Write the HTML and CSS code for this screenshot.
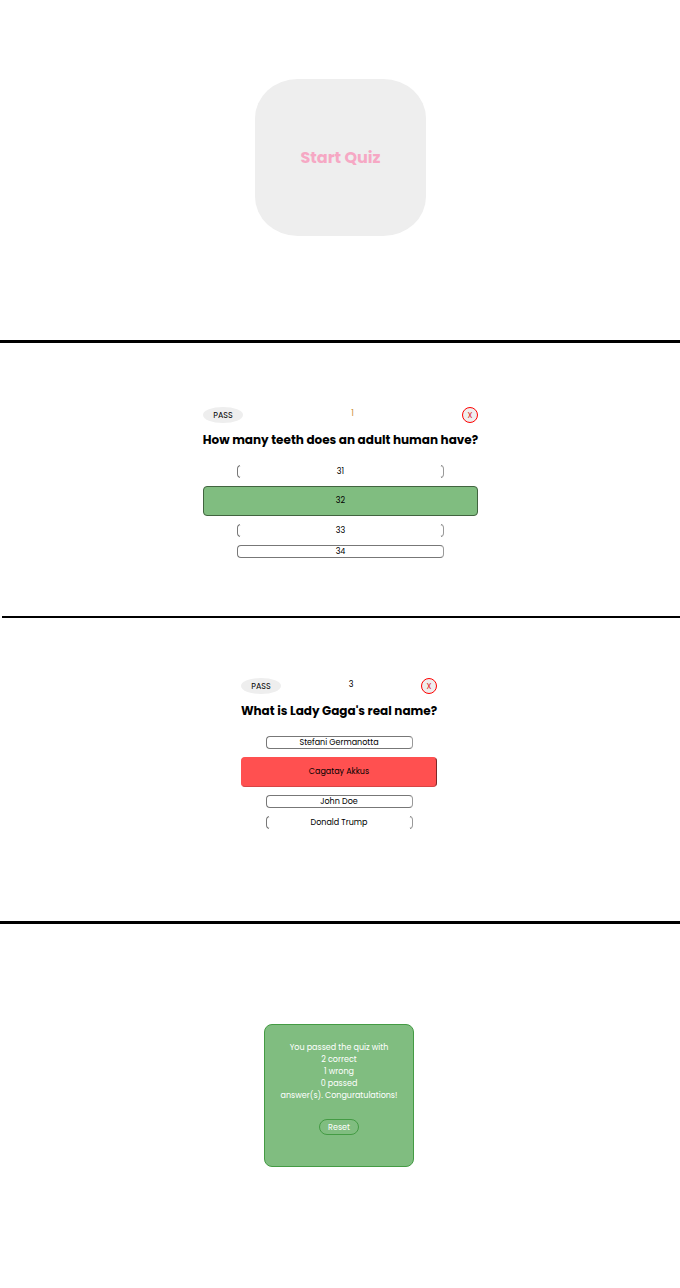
FILE: index.html
```html
<!DOCTYPE html>
<html lang="en">
<head>
<meta charset="utf-8">
<meta name="viewport" content="width=device-width, initial-scale=1">
<title>Quiz</title>
<link rel="stylesheet" href="styles.css">
</head>
<body>
<main>
  <section class="screen screen-start">
    <button class="start" type="button">Start Quiz</button>
  </section>
  <hr class="divider">
  <section class="screen screen-question">
    <div class="quiz">
      <div class="quiz-bar">
        <button class="pass" type="button">PASS</button>
        <span class="number number-amber">1</span>
        <button class="close" type="button">X</button>
      </div>
      <h2 class="question">How many teeth does an adult human have?</h2>
      <div class="options">
        <button class="option option-open" type="button">31</button>
        <button class="option option-correct" type="button">32</button>
        <button class="option option-open" type="button">33</button>
        <button class="option" type="button">34</button>
      </div>
    </div>
  </section>
  <hr class="divider divider-thin">
  <section class="screen screen-question screen-tall">
    <div class="quiz quiz-narrow">
      <div class="quiz-bar">
        <button class="pass" type="button">PASS</button>
        <span class="number">3</span>
        <button class="close" type="button">X</button>
      </div>
      <h2 class="question">What is Lady Gaga's real name?</h2>
      <div class="options">
        <button class="option" type="button">Stefani Germanotta</button>
        <button class="option option-wrong" type="button">Cagatay Akkus</button>
        <button class="option" type="button">John Doe</button>
        <button class="option option-open" type="button">Donald Trump</button>
      </div>
    </div>
  </section>
  <hr class="divider">
  <section class="screen screen-result">
    <div class="result">
      <p class="summary">You passed the quiz with<br>2 correct<br>1 wrong<br>0 passed<br>answer(s). Conguratulations!</p>
      <button class="reset" type="button">Reset</button>
    </div>
  </section>
</main>
</body>
</html>
```
FILE: styles.css
```css
* {
  box-sizing: border-box;
}

body {
  margin: 0;
  background: #fff;
  color: #000;
  font-family: Poppins, Inter, "Open Sans", sans-serif;
  font-size: 8px;
  line-height: 12px;
}

button {
  margin: 0;
  padding: 0;
  font: inherit;
  color: inherit;
  cursor: pointer;
}

.screen {
  display: flex;
  justify-content: center;
  align-items: flex-start;
}

.screen-start {
  padding: 79px 0 104px 1px;
}

.screen-question {
  padding: 64px 0 58px 1px;
}

.screen-tall {
  padding: 60px 2px 92px 0;
}

.screen-result {
  padding: 100px 2px 121px 0;
}

.divider {
  height: 3px;
  margin: 0;
  border: 0;
  background: #000;
}

.divider-thin {
  height: 2px;
  margin-left: 2px;
}

.start {
  width: 171px;
  height: 157px;
  border: 0;
  border-radius: 25%;
  background: #eee;
  color: #f6a8c4;
  font-size: 16px;
  font-weight: 700;
}

.quiz {
  width: 275px;
}

.quiz-narrow {
  width: 196px;
}

.quiz-bar {
  display: flex;
  justify-content: space-between;
  align-items: flex-start;
}

.number {
  line-height: 14px;
}

.number-amber {
  color: #c98a30;
}

.pass,
.close {
  height: 16px;
  padding-top: 2px;
  border-radius: 50%;
  background: #eee;
}

.pass {
  width: 40px;
  border: 0;
}

.close {
  width: 16px;
  border: 1px solid #f00;
  color: #d22;
}

.question {
  display: flex;
  justify-content: center;
  margin: 8px 0 16px;
  font-size: 12px;
  line-height: 18px;
  font-weight: 700;
  white-space: nowrap;
}

.options {
  display: flex;
  flex-direction: column;
  align-items: center;
  gap: 8px;
}

.option {
  position: relative;
  width: 75%;
  height: 13px;
  border: 1px solid #777;
  border-right-color: #999;
  border-radius: 4px;
  background: #fff;
}

/* Leaves only the sides and corners of the outline visible. */
.option-open::before {
  content: "";
  position: absolute;
  inset: -1px 2px;
  border: solid #fff;
  border-width: 1px 0;
}

.option-correct,
.option-wrong {
  width: 100%;
  height: 30px;
}

.option-correct {
  border-color: #41643f;
  background: #80bd80;
}

.option-wrong {
  border-color: #ff5050 #7d2727 #d84444 #ff5050;
  background: #ff5050;
}

.result {
  display: flex;
  flex-direction: column;
  align-items: center;
  width: 150px;
  height: 143px;
  padding: 17px 0;
  border: 1px solid #449b44;
  border-radius: 8px;
  background: #80bd80;
  color: #fff;
  text-align: center;
}

.summary {
  margin: 0 0 17px;
}

.reset {
  width: 40px;
  height: 16px;
  padding-top: 1px;
  border: 1px solid #449b44;
  border-radius: 8px;
  background: transparent;
}
```
